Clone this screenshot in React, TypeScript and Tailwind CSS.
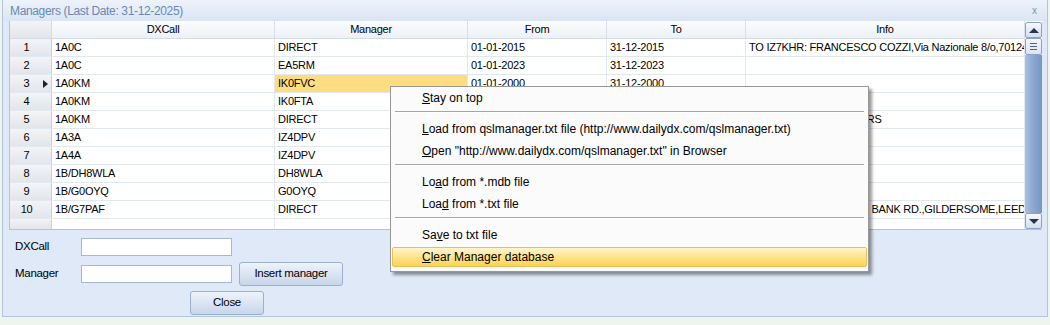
import React from "react";

const cols = [
  { key: "dx", label: "DXCall", w: "w-[223px]" },
  { key: "mgr", label: "Manager", w: "w-[193px]" },
  { key: "from", label: "From", w: "w-[139px]" },
  { key: "to", label: "To", w: "w-[139px]" },
  { key: "info", label: "Info", w: "w-[279px]" },
] as const;

type Row = { dx: string; mgr: string; from: string; to: string; info: string };

// from/to of rows under the popup are left out, the menu hides them anyway
const rows: Row[] = [
  { dx: "1A0C", mgr: "DIRECT", from: "01-01-2015", to: "31-12-2015", info: "TO IZ7KHR: FRANCESCO COZZI,Via Nazionale 8/o,70124 BARI" },
  { dx: "1A0C", mgr: "EA5RM", from: "01-01-2023", to: "31-12-2023", info: "" },
  { dx: "1A0KM", mgr: "IK0FVC", from: "01-01-2000", to: "31-12-2000", info: "" },
  { dx: "1A0KM", mgr: "IK0FTA", from: "", to: "", info: "" },
  { dx: "1A0KM", mgr: "DIRECT", from: "", to: "", info: "EXCEPT BURO MEMBERS" },
  { dx: "1A3A", mgr: "IZ4DPV", from: "", to: "", info: "" },
  { dx: "1A4A", mgr: "IZ4DPV", from: "", to: "", info: "" },
  { dx: "1B/DH8WLA", mgr: "DH8WLA", from: "", to: "", info: "" },
  { dx: "1B/G0OYQ", mgr: "G0OYQ", from: "", to: "", info: "" },
  { dx: "1B/G7PAF", mgr: "DIRECT", from: "", to: "", info: "MR G7PAF: 49 CHURCH BANK RD.,GILDERSOME,LEEDS" },
];

const SELECTED_ROW = 2;

const Sep = () => (
  <div className="h-[9px] pt-[2px] mx-[4px]">
    <div className="h-px bg-[#a5a5a5]" />
    <div className="h-px bg-white" />
  </div>
);

const Item = ({ children, active }: { children: React.ReactNode; active?: boolean }) =>
  active ? (
    <div className="h-[22px] px-[1px] pt-[1px]">
      <div className="h-[20px] rounded-[2px] border border-[#e2c05c] bg-linear-to-b from-[#fff4cc] via-[#fee48e] to-[#fdd34c] pl-[29px] flex items-center">
        {children}
      </div>
    </div>
  ) : (
    <div className="h-[22px] pl-[31px] flex items-center">{children}</div>
  );

const Button = ({ children, w }: { children: React.ReactNode; w: string }) => (
  <button
    className={`${w} h-[24px] rounded-[3px] border border-[#9cb0cc] bg-linear-to-b from-[#eef3fa] to-[#c8d6ea] text-[11.5px] text-black tracking-[-0.3px]`}
  >
    {children}
  </button>
);

export default function App() {
  return (
    <div className="relative w-[1050px] h-[325px] overflow-hidden bg-[#eef4ee] font-['Liberation_Sans',Arial,sans-serif] text-black">
      <div className="mx-[2px] h-[317px] border-x border-b border-[#b3c5dc] bg-[#dfe9f7] flex flex-col">
        {/* title bar */}
        <div className="h-[21px] shrink-0 flex items-center justify-between pl-[7px] pr-[10px] bg-linear-to-b from-[#eef3fb] to-[#dae5f4]">
          <span className="text-[12px] tracking-[-0.35px] text-[#6a89b1]">Managers (Last Date: 31-12-2025)</span>
          <span className="text-[10px] text-[#8193ab] leading-none">x</span>
        </div>

        {/* grid */}
        <div className="ml-[6px] mr-[5px] h-[209px] shrink-0 flex border-l border-b border-[#b4c4d8] bg-white text-[11px] tracking-[-0.25px]">
          <div className="w-[1015px] flex flex-col">
            <div className="h-[18px] flex border-b border-[#d3dbe5] bg-linear-to-b from-[#fbfcfd] to-[#edf1f6]">
              <div className="w-[42px] shrink-0 border-r border-[#d3dbe5] bg-linear-to-b from-[#f3f4f6] to-[#e2e5ea]" />
              {cols.map((c) => (
                <div key={c.key} className={`${c.w} shrink-0 border-r border-[#d8dfe8] flex items-center justify-center`}>
                  {c.label}
                </div>
              ))}
            </div>
            {rows.map((r, i) => (
              <div key={i} className="h-[18px] flex border-b border-[#e2e8f0]">
                <div className="w-[42px] shrink-0 flex items-center border-r border-[#c9d1dc] bg-linear-to-b from-[#f3f4f6] to-[#e2e5ea]">
                  <span className="w-[33px] text-center">{i + 1}</span>
                  {i === SELECTED_ROW && (
                    <span className="w-0 h-0 border-y-[4px] border-y-transparent border-l-[5px] border-l-[#222]" />
                  )}
                </div>
                {cols.map((c) => (
                  <div
                    key={c.key}
                    className={`${c.w} shrink-0 border-r border-[#e2e8f0] px-[3px] flex items-center overflow-hidden whitespace-nowrap ${
                      i === SELECTED_ROW && c.key === "mgr" ? "bg-[#fedd80]" : ""
                    }`}
                  >
                    {r[c.key]}
                  </div>
                ))}
              </div>
            ))}
            <div className="flex-1 flex">
              <div className="w-[42px] shrink-0 border-r border-[#c9d1dc] bg-linear-to-b from-[#f3f4f6] to-[#e2e5ea]" />
              {cols.map((c) => (
                <div key={c.key} className={`${c.w} shrink-0 border-r border-[#e2e8f0]`} />
              ))}
            </div>
          </div>

          {/* scrollbar */}
          <div className="w-[17px] flex flex-col pt-[1px]">
            <div className="h-[16px] rounded-[2px] border border-[#8aa2c4] bg-linear-to-b from-[#f6f8fc] to-[#d3deee] flex items-center justify-center">
              <span className="w-0 h-0 border-x-[5px] border-x-transparent border-b-[5px] border-b-[#24364f]" />
            </div>
            <div className="h-[17px] rounded-[2px] border border-[#8aa2c4] bg-linear-to-b from-[#f3f6fb] to-[#dbe4f1] flex flex-col items-center justify-center gap-[2px]">
              <span className="w-[7px] h-px bg-[#4d6485]" />
              <span className="w-[7px] h-px bg-[#4d6485]" />
              <span className="w-[7px] h-px bg-[#4d6485]" />
            </div>
            <div className="flex-1 bg-linear-to-r from-[#a9c0e0] via-[#8aa7d1] to-[#7896c4]" />
            <div className="h-[16px] rounded-[2px] border border-[#8aa2c4] bg-linear-to-b from-[#f6f8fc] to-[#d3deee] flex items-center justify-center">
              <span className="w-0 h-0 border-x-[5px] border-x-transparent border-t-[5px] border-t-[#24364f]" />
            </div>
          </div>
        </div>

        {/* bottom panel */}
        <div className="flex-1 pt-[8px] pl-[12px] text-[11.5px] tracking-[-0.3px]">
          <div className="h-[18px] flex items-center">
            <span className="w-[66px]">DXCall</span>
            <input className="w-[151px] h-[18px] bg-white border border-[#a6b8ce] outline-none" />
          </div>
          <div className="mt-[6px] h-[24px] flex items-center">
            <span className="w-[66px]">Manager</span>
            <input className="w-[151px] h-[18px] bg-white border border-[#a6b8ce] outline-none" />
            <div className="ml-[7px]">
              <Button w="w-[104px]">Insert manager</Button>
            </div>
          </div>
          <div className="mt-[5px] pl-[175px]">
            <Button w="w-[74px]">Close</Button>
          </div>
        </div>
      </div>

      {/* context menu */}
      <div className="absolute left-[390px] top-[86px] w-[479px] border border-[#979797] bg-[#fcfbfc] pb-[3px] text-[12px] shadow-[3px_3px_3px_rgba(0,0,0,0.4)]">
        <Item>
          <span><u>S</u>tay on top</span>
        </Item>
        <Sep />
        <Item>
          <span><u>L</u>oad from qslmanager.txt file (http://www.dailydx.com/qslmanager.txt)</span>
        </Item>
        <Item>
          <span><u>O</u>pen "http://www.dailydx.com/qslmanager.txt" in Browser</span>
        </Item>
        <Sep />
        <Item>
          <span>Lo<u>a</u>d from *.mdb file</span>
        </Item>
        <Item>
          <span>Loa<u>d</u> from *.txt file</span>
        </Item>
        <Sep />
        <Item>
          <span>Sa<u>v</u>e to txt file</span>
        </Item>
        <Item active>
          <span><u>C</u>lear Manager database</span>
        </Item>
      </div>
    </div>
  );
}
